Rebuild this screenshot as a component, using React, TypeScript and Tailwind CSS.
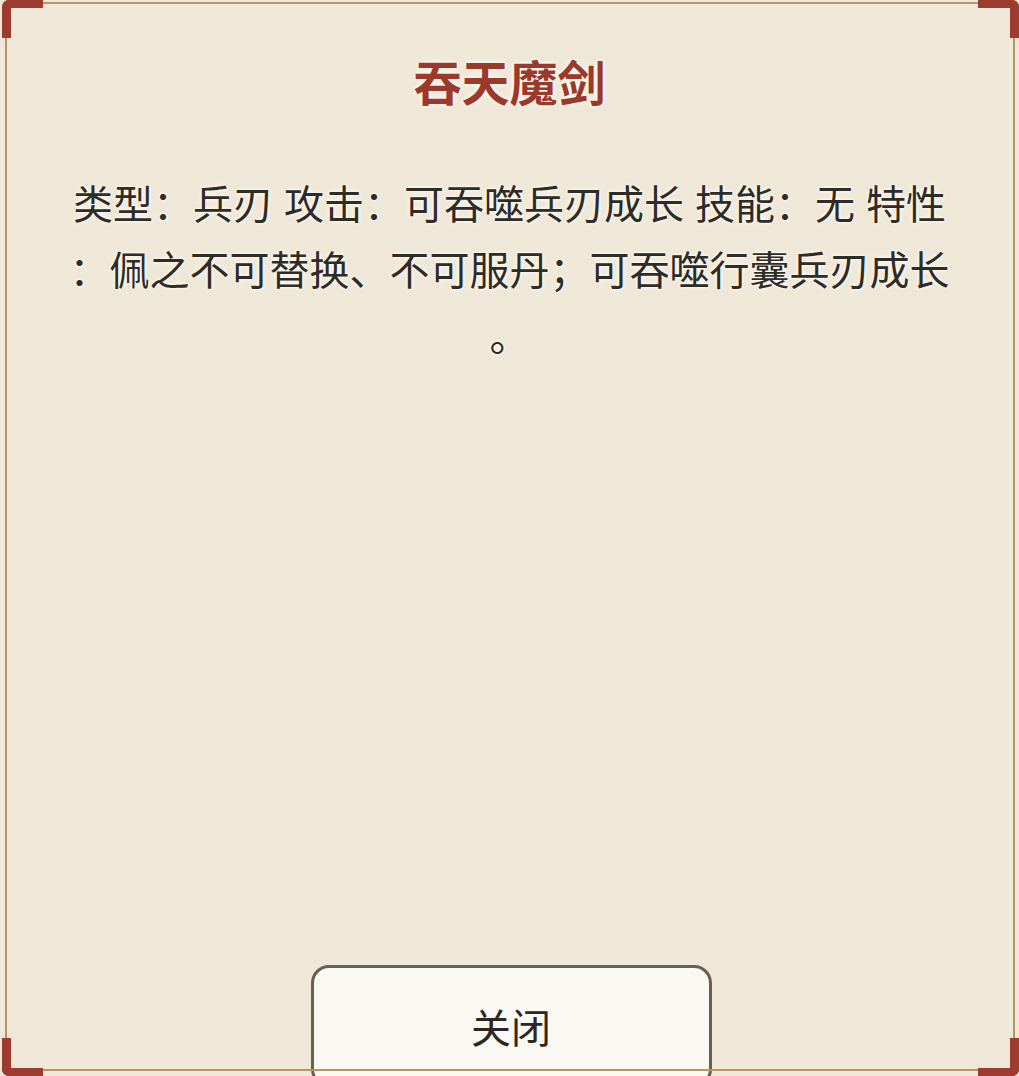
import React from "react";

const font = { fontFamily: '"Noto Sans CJK SC", "Noto Sans", sans-serif' };

function CornerMarks() {
  return (
    <>
      {/* frame line */}
      <div className="pointer-events-none absolute left-[5px] right-[4px] top-[2px] bottom-[5px] border-[2px] border-[#b39865]" />
      {/* red L-shaped corner brackets */}
      <div className="pointer-events-none absolute left-[2px] top-0 h-[38px] w-[41px] rounded-tl-[7px] border-l-[9px] border-t-[8px] border-[#9c3b2e]" />
      <div className="pointer-events-none absolute right-0 top-0 h-[38px] w-[41px] rounded-tr-[7px] border-r-[9px] border-t-[8px] border-[#9c3b2e]" />
      <div className="pointer-events-none absolute bottom-0 left-[2px] h-[38px] w-[41px] rounded-bl-[7px] border-b-[8px] border-l-[9px] border-[#9c3b2e]" />
      <div className="pointer-events-none absolute bottom-0 right-0 h-[38px] w-[41px] rounded-br-[7px] border-b-[8px] border-r-[9px] border-[#9c3b2e]" />
    </>
  );
}

export default function App() {
  return (
    <div
      className="relative flex h-[1076px] w-full flex-col items-center overflow-hidden bg-[#efe7d7]"
      style={font}
    >
      <h1 className="mt-[50px] text-[48px] font-semibold leading-[60px] text-[#9b3a2c] [text-shadow:0_0_3px_#fffdf6,0_0_6px_#fffdf6]">
        吞天魔剑
      </h1>

      <p className="mt-[59px] w-[886px] text-center text-[40px] leading-[66px] text-[#2f2b27] [line-break:anywhere] [word-spacing:2px] [text-shadow:0_0_3px_#fffdf6,0_0_5px_#fffdf6]">
        类型：兵刃 攻击：可吞噬兵刃成长 技能：无 特性：佩之不可替换、不可服丹；可吞噬行囊兵刃成长。
      </p>

      <button className="mt-auto -mb-[11px] ml-[3px] flex h-[122px] w-[401px] justify-center rounded-[18px] border-[3px] border-[#676052] bg-[#faf8f2] pt-[38px] text-[40px] leading-[40px] text-[#2b2824]">
        关闭
      </button>

      <CornerMarks />
    </div>
  );
}
